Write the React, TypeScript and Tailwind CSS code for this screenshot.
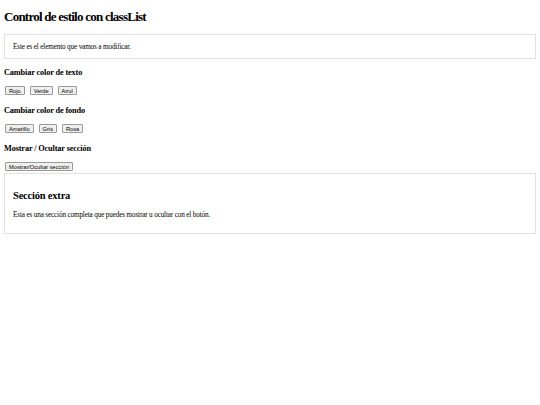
import { useState } from 'react'

const serif = "font-['Liberation_Serif','Times_New_Roman',serif]"
const btn =
  "flex h-[9px] items-center rounded-[1px] border border-[#9a9a9a] bg-[#efefef] px-[3px] text-[5.7px] leading-[6px] text-black font-['Liberation_Sans',Arial,sans-serif]"

export default function App() {
  const [textColor, setTextColor] = useState('')
  const [bgColor, setBgColor] = useState('')
  const [showExtra, setShowExtra] = useState(true)

  return (
    <div className={`min-h-[405px] bg-white px-[4px] text-black ${serif}`}>
      <h1 className="pt-[9px] text-[13px] font-bold leading-[16px] tracking-[-0.75px]">Control de estilo con classList</h1>

      <div
        className="mt-[9px] border border-[#e2e2e2] px-[8px] pb-[7px] pt-[8px] text-[7.2px] leading-[8px] tracking-[-0.15px] shadow-[0_0_1px_rgba(0,0,0,0.08)]"
        style={{ color: textColor || undefined, backgroundColor: bgColor || undefined }}
      >
        Este es el elemento que vamos a modificar.
      </div>

      <h3 className="mt-[8px] text-[8.3px] font-bold leading-[11px] tracking-[-0.15px]">Cambiar color de texto</h3>
      <div className="mt-[8px] flex gap-[5px] pl-[1px]">
        <button className={btn} onClick={() => setTextColor('red')}>Rojo</button>
        <button className={btn} onClick={() => setTextColor('green')}>Verde</button>
        <button className={btn} onClick={() => setTextColor('blue')}>Azul</button>
      </div>

      <h3 className="mt-[10px] text-[8.3px] font-bold leading-[11px] tracking-[-0.15px]">Cambiar color de fondo</h3>
      <div className="mt-[8px] flex gap-[5px] pl-[1px]">
        <button className={btn} onClick={() => setBgColor('yellow')}>Amarillo</button>
        <button className={btn} onClick={() => setBgColor('lightgray')}>Gris</button>
        <button className={btn} onClick={() => setBgColor('pink')}>Rosa</button>
      </div>

      <h3 className="mt-[10px] text-[8.3px] font-bold leading-[11px] tracking-[-0.15px]">Mostrar / Ocultar sección</h3>
      <div className="mt-[8px] flex pl-[1px]">
        <button className={btn} onClick={() => setShowExtra(!showExtra)}>Mostrar/Ocultar sección</button>
      </div>

      {showExtra && (
        <div className="mt-[2px] border border-[#e2e2e2] px-[8px] pb-[14px] pt-[15px] shadow-[0_0_1px_rgba(0,0,0,0.08)]">
          <h2 className="text-[10.5px] font-bold leading-[14px] tracking-[-0.2px]">Sección extra</h2>
          <p className="mt-[8px] text-[7.2px] leading-[8px] tracking-[-0.15px]">
            Esta es una sección completa que puedes mostrar u ocultar con el botón.
          </p>
        </div>
      )}
    </div>
  )
}
